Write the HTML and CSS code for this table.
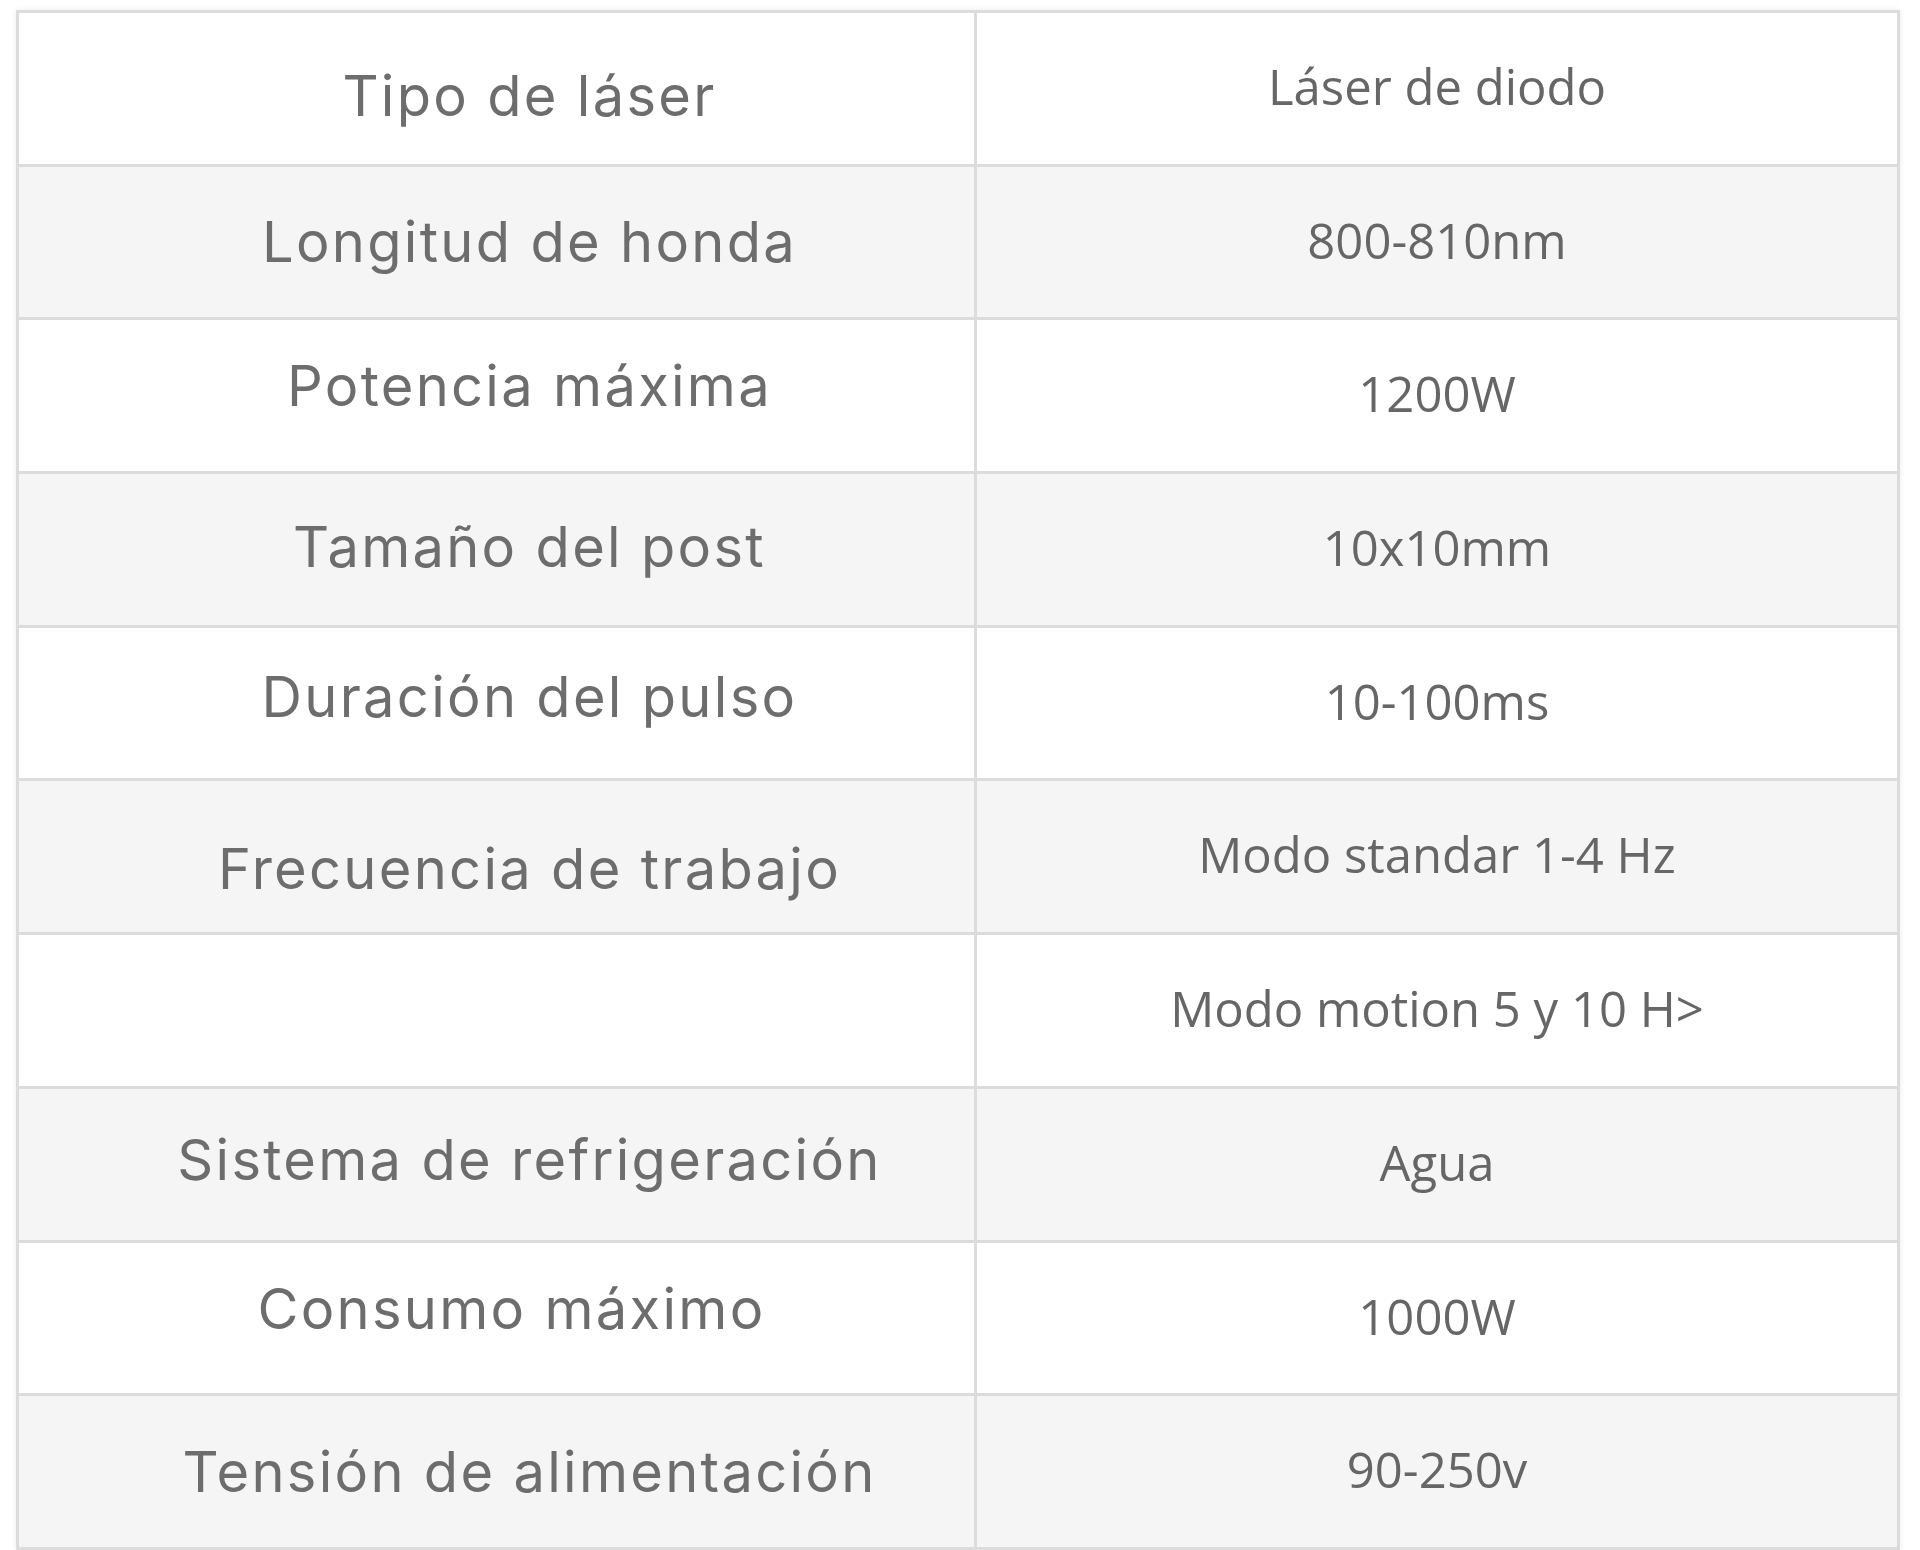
FILE: index.html
```html
<!DOCTYPE html>
<html lang="es">
<head>
<meta charset="utf-8">
<title>Especificaciones</title>
<link rel="stylesheet" href="styles.css">
</head>
<body>
<main class="page">
  <table class="spec">
    <colgroup>
      <col class="spec__col-label">
      <col class="spec__col-value">
    </colgroup>
    <tbody>
      <tr><td class="spec__label">Tipo de láser</td><td class="spec__value">Láser de diodo</td></tr>
      <tr><td class="spec__label">Longitud de honda</td><td class="spec__value">800-810nm</td></tr>
      <tr><td class="spec__label">Potencia máxima</td><td class="spec__value">1200W</td></tr>
      <tr><td class="spec__label">Tamaño del post</td><td class="spec__value">10x10mm</td></tr>
      <tr><td class="spec__label">Duración del pulso</td><td class="spec__value">10-100ms</td></tr>
      <tr><td class="spec__label">Frecuencia de trabajo</td><td class="spec__value">Modo standar 1-4 Hz</td></tr>
      <tr><td class="spec__label"></td><td class="spec__value">Modo motion 5 y 10 H&gt;</td></tr>
      <tr><td class="spec__label">Sistema de refrigeración</td><td class="spec__value">Agua</td></tr>
      <tr><td class="spec__label">Consumo máximo</td><td class="spec__value">1000W</td></tr>
      <tr><td class="spec__label">Tensión de alimentación</td><td class="spec__value">90-250v</td></tr>
    </tbody>
  </table>
</main>
</body>
</html>
```

FILE: styles.css
```css
html, body {
  margin: 0;
  padding: 0;
  background: #ffffff;
}

.page {
  padding: 10px 20px 0 16px;
}

.spec {
  width: 1884px;
  table-layout: fixed;
  border-collapse: separate;
  border-spacing: 0;
  border-top: 3px solid #dcdcdc;
  border-left: 3px solid #dcdcdc;
  box-shadow: 0 0 6px rgba(0, 0, 0, 0.08);
}

.spec__col-label { width: 958px; }
.spec__col-value { width: 923px; }

.spec tr {
  height: 153.7px;
}

.spec tr:nth-child(even) td {
  background: #f5f5f5;
}

.spec td {
  border-right: 3px solid #dcdcdc;
  border-bottom: 3px solid #dcdcdc;
  padding: 0;
  vertical-align: top;
  text-align: center;
  white-space: nowrap;
}

.spec__label {
  font-family: Inter, "Liberation Sans", sans-serif;
  font-size: 56px;
  letter-spacing: 2.3px;
  line-height: 1;
  color: #6d6d6d;
  padding-left: 66px !important;
  padding-top: 48px !important;
}

.spec__value {
  font-family: "Open Sans", "Liberation Sans", sans-serif;
  font-size: 49px;
  line-height: 1;
  color: #666666;
  padding-top: 49px !important;
}

/* individual label offsets, matching the source layout */
.spec tr:nth-child(1) .spec__label { padding-top: 55px !important; }
.spec tr:nth-child(2) .spec__label { padding-top: 47px !important; }
.spec tr:nth-child(3) .spec__label { padding-top: 38px !important; }
.spec tr:nth-child(4) .spec__label { padding-top: 45px !important; }
.spec tr:nth-child(5) .spec__label { padding-top: 41px !important; }
.spec tr:nth-child(6) .spec__label { padding-top: 60px !important; }
.spec tr:nth-child(8) .spec__label { padding-top: 43px !important; }
.spec tr:nth-child(9) .spec__label { padding-top: 38px !important; padding-left: 30px !important; }
.spec tr:nth-child(10) .spec__label { padding-top: 48px !important; }
```
